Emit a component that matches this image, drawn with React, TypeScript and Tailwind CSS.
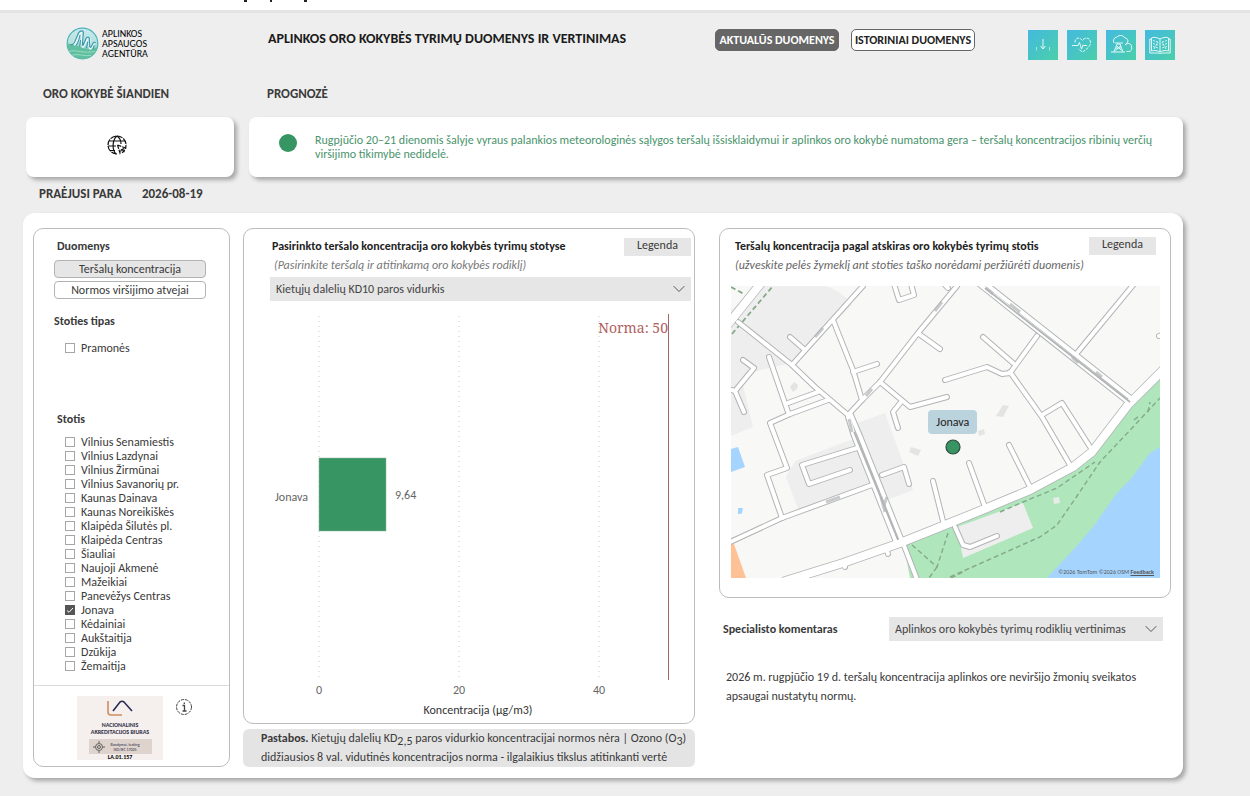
import { useState } from "react";
import type { ReactNode } from "react";

const stations = [
  "Vilnius Senamiestis",
  "Vilnius Lazdynai",
  "Vilnius Žirmūnai",
  "Vilnius Savanorių pr.",
  "Kaunas Dainava",
  "Kaunas Noreikiškės",
  "Klaipėda Šilutės pl.",
  "Klaipėda Centras",
  "Šiauliai",
  "Naujoji Akmenė",
  "Mažeikiai",
  "Panevėžys Centras",
  "Jonava",
  "Kėdainiai",
  "Aukštaitija",
  "Dzūkija",
  "Žemaitija",
];

function Check({ label, initial = false }: { label: string; initial?: boolean }) {
  const [on, setOn] = useState(initial);
  return (
    <label className="flex h-[14px] items-center gap-[6px] leading-[14px]">
      <span className="relative flex">
        <input
          type="checkbox"
          checked={on}
          onChange={() => setOn(!on)}
          className="peer size-[10px] appearance-none border border-[#a6a6a6] bg-white checked:border-[#555] checked:bg-[#555]"
        />
        <svg viewBox="0 0 10 10" className="pointer-events-none absolute inset-0 hidden size-[10px] peer-checked:block">
          <path d="M2 5.5 4 7.3 8 3" fill="none" stroke="#fff" strokeWidth="1" />
        </svg>
      </span>
      {label}
    </label>
  );
}

function Dropdown({ label, options, className }: { label: string; options: string[]; className: string }) {
  return (
    <div className={"relative " + className}>
      <select
        aria-label={label}
        className="h-6 w-full appearance-none bg-[#e6e6e6] pl-[6px] pr-7 text-[#444]"
      >
        {options.map((o) => (
          <option key={o}>{o}</option>
        ))}
      </select>
      <svg viewBox="0 0 12 8" className="pointer-events-none absolute right-[6px] top-2 h-2 w-3">
        <path d="M.7 1.2 6 6.5l5.3-5.3" fill="none" stroke="#555" strokeWidth="1" />
      </svg>
    </div>
  );
}

function Logo() {
  return (
    <a href="#" className="ml-[43px] flex h-[34px] items-center gap-[3px]">
      <svg viewBox="0 0 34 34" className="size-[33px]">
        <defs>
          <linearGradient id="lg" x1="0" y1="0" x2="0" y2="1">
            <stop offset="0" stopColor="#c8eaf0" />
            <stop offset="0.45" stopColor="#b7e3dd" />
            <stop offset="1" stopColor="#4cb894" />
          </linearGradient>
        </defs>
        <circle cx="17" cy="17" r="15.8" fill="url(#lg)" stroke="#4bb3b8" strokeWidth="1.2" />
        <path d="M1.500 17Q9 17.500 16 21T32.500 21A16 16 0 0 1 17 33 16 16 0 0 1 1.500 17z" fill="#5fbf9f" />
        <path d="M3 25c8-2 16 3 27 0M6 29c8-2 13 2 20 0" fill="none" stroke="#9bdcc4" strokeWidth="1" />
        <path d="M8 18.500 15 5l1.500 0L17.500 20l4.500-8.500h1.500L25 22l4-6" fill="none" stroke="#e4f6f8" strokeWidth="3" strokeLinejoin="round" />
        <path
          d="M5 18.500Q8 18.500 10 13l3-7q1-2 3.500-2 1.500 0 1.300 3L17 18q0 2 1 0l2.500-6q1-2 2.500-1.500T24 13l.5 7q.5 2 1.500 0l1.500-3q1-1.500 3-1"
          fill="none"
          stroke="#3f97ab"
          strokeWidth="1.300"
        />
        <path d="M10.500 19Q13 16 14.500 8M14 20.500l1-7M21 22l1.500-7M28 23l1-4" fill="none" stroke="#3f97ab" strokeWidth="1.100" />
      </svg>
      <span className="pt-px text-[10px] leading-[10px] text-black">
        APLINKOS
        <br />
        APSAUGOS
        <br />
        AGENTŪRA
      </span>
    </a>
  );
}

function Tile({ label, children }: { label: string; children: ReactNode }) {
  return (
    <button aria-label={label} className="size-[30px] bg-linear-to-br from-[#45b9df] to-[#4bcfa8] p-[3px]">
      <svg viewBox="0 0 24 24" className="size-6" fill="none" stroke="#fff" strokeOpacity="0.85" strokeWidth="1">
        {children}
      </svg>
    </button>
  );
}

function Tiles() {
  return (
    <div className="ml-auto mr-2 mt-1 flex gap-[9px]">
      <Tile label="Atsisiųsti">
        <path d="M12 6v10M9.500 13l2.500 3 2.500-3" />
        <path d="M5.500 14v3.500M18.500 14v3.500" strokeOpacity="0.5" />
      </Tile>
      <Tile label="Sveikata">
        <path d="M5 9.500C5 4 10 4 12.500 7.500 14 4 21 4 20.500 10c-.3 4-5 7-8 9-1.500-1-3-2-4.200-3.200" strokeDasharray="3 1" />
        <path d="M2 12.500h6l1.500-3 2 6.500 1.500-4 1 .5h3" />
      </Tile>
      <Tile label="Oro tarša">
        <path d="M5 10a4 4 0 0 1 3-6 5 5 0 0 1 8 1c3 0 4 4 1.500 5.500L16 12c3-3 7-1 6.500 2 1 3-1 4.500-3 4.500h-2" />
        <path d="M2 19h14M5 19l3-8h3l3 8M7 15h5M6.500 17.500l5.500-5M12.500 17.500l-5-5M6 10h8" />
      </Tile>
      <Tile label="Informacija">
        <path d="M12 6C8 4 5 4 3.500 5v13c3-1 6-.5 8.500 1 2.500-1.500 5.500-2 8.500-1V5C19 4 16 4 12 6zv13" />
        <path d="M3.500 6H1.800v14h9l1.200.8 1.200-.8h9V6h-1.700" />
        <path d="M5 7.500l5 1.500M5 10.500l5 1.500M5 13.500l5 1.500M19 7.500 14 9M19 10.500 14 12M19 13.500 14 15M6 16l4-7M18 16l-4-7" strokeWidth="0.900" strokeDasharray="2 1" />
      </Tile>
    </div>
  );
}

const minorRoads = [
  "M738 322 792 365 815 387 848 415",
  "M792 365 863 286",
  "M805 350 790 337",
  "M833 320 853 370 862 400",
  "M853 372 877 364",
  "M848 415 862 400 880 382 918 333 957 286",
  "M919 334 940 349",
  "M894 284 899 300 914 295 911 284",
  "M769 357 788 412",
  "M788 403 818 392",
  "M828 400 790 414 770 423 787 468 767 475 782 518",
  "M743 360 754 368 735 391 728 389",
  "M735 391 744 412",
  "M880 382 910 407 947 397",
  "M901 402 893 412 898 428",
  "M945 380 987 367 1002 374 1010 373",
  "M1010 373 1037 336",
  "M1013 363 983 337",
  "M1010 372 1042 417 1070 465",
  "M1042 415 1062 403 1092 450",
  "M1077 353 1134 284",
  "M969 463 985 507",
  "M1009 445 1031 489",
  "M955 527 963 545 970 547 997 536",
  "M903 543 918 582",
  "M857 448 802 465 809 484 850 470",
  "M872 485 782 518 728 543",
  "M882 475 904 467 909 484",
  "M933 481 944 525",
  "M844 562 845 567",
  "M886 548 888 554",
  "M944 284 948 288",
  "M1165 334 1159 336",
];
const doubleRoads = [
  "M979 284 1128 402",
  "M986 284 1132 399",
  "M848 417 854 436 896 542",
  "M851 415 860 436 902 541",
];
const mainRoads = [
  "M1164 369 1128 405 1092 452 1073 467 1030 490 987 508 950 523 900 543 843 563 785 581",
  "M762 282 725 328",
];

function StationMap() {
  return (
    <div className="relative">
      <svg
        viewBox="731 286 429 292"
        className="block w-full"
        role="img"
        aria-label="Jonavos stoties žemėlapis"
      >
        <rect x="731" y="286" width="429" height="292" fill="#f8f8f7" />
        <g fill="#eeeeee">
          <path d="M731 310 759 286H826Q842 291 852 305L792 363 757 371 743 377 731 393z" />
          <path d="M731 393 743 385 753 427 731 436z" />
          <path d="M795 461 853 439 873 484 799 511 786 477z" />
          <path d="M857 423 885 413 913 490 887 500z" />
        </g>
        <path d="M1160 376 1133 404 1094 454 1074 470 1031 493 950 527 905 545 916 578H1062L1160 455z" fill="#afe6bc" />
        <path d="M904 546 907 545 919 578H910z" fill="#afe6bc" />
        <path d="M957 527 1023 503 1033 528 963 558z" fill="#eeeeee" />
        <path d="M1160 447 1150 453 1142 464 1130 480 1117 493 1093 527 1075 548 1047 578H1160z" fill="#a5d4ff" />
        <path d="M731 449 738 447 745 467 731 472zM738 508h5l-1 5-2 1h-2z" fill="#a5d4ff" />
        <path d="M731 542 734 544 746 578H731z" fill="#ffc296" />
        <g fill="#e4e4e3">
          <path d="M794 382l4 3-1 4-4 3-3-5zM911 447l10 3-3 6-9-4zM1003 405l6 1-6 11-7-1zM978 431l6-2 1 5-6 2z" />
        </g>
        <path d="M1053 498l6-1 1 6-6 1z" fill="#e8ece6" />
        <g fill="none" stroke="#86a98b" strokeWidth="1.400" strokeDasharray="5 3">
          <path d="M950 577 1040 537 1057 525 1077 496 1100 462 1133 427 1160 398" />
          <path d="M1000 512 1023 502 1057 488 1095 462" />
          <path d="M912 545 937 567 948 533M937 567 929 578M951 578 965 571" />
          <path d="M732 334 773 286M731 287 744 294" strokeWidth="1.800" />
          <path d="M1134 420 1139 416M1148 412 1150 402" />
        </g>
        <g fill="none" strokeLinejoin="round" strokeLinecap="round">
          {[...minorRoads, ...doubleRoads].map((d) => (
            <path key={d} d={d} stroke="#b2b4b5" strokeWidth="6" />
          ))}
          {mainRoads.map((d) => (
            <path key={d} d={d} stroke="#b2b4b5" strokeWidth="9.500" />
          ))}
          {[...minorRoads, ...doubleRoads].map((d) => (
            <path key={d} d={d} stroke="#fff" strokeWidth="4" />
          ))}
          {mainRoads.map((d) => (
            <path key={d} d={d} stroke="#fff" strokeWidth="8" />
          ))}
        </g>
        <g fill="none" stroke="#b2b4b5">
          <path d="M985 288 1130 402M854 432 898 540" strokeWidth="1.600" />
          <path d="M849 419 852 432M881 497 885 512M887 497 883 508M986 288 993 294M1010 304 1020 312M1072 357 1078 363M1096 372 1102 377M935 311 942 302M815 337 823 328M866 396 872 389M826 502 840 497" strokeWidth="3" strokeOpacity="0.700" />
        </g>
        <circle cx="953" cy="447" r="7" fill="#379463" stroke="#2e4a3b" strokeWidth="1.200" />
      </svg>
      <div className="absolute left-[46%] top-[42.5%] rounded bg-[#bad3dd] px-2 py-1 leading-4 text-[#222]">Jonava</div>
      <div className="absolute bottom-[2px] right-[6px] text-[6px] leading-[8px] text-[#555]">
        ©2026 TomTom ©2026 OSM{" "}
        <a href="#" className="font-bold underline">
          Feedback
        </a>
      </div>
    </div>
  );
}

function Chart() {
  const ticks = [0, 20, 40];
  const x = (v: number) => 319 + v * 7;
  return (
    <svg viewBox="244 301 450 422" className="block w-full" role="img" aria-label="Koncentracija pagal stotį">
      {ticks.map((t) => (
        <g key={t}>
          <line x1={x(t)} x2={x(t)} y1="316" y2="681" stroke="#c8c8c8" strokeDasharray="1 4" />
          <text x={x(t)} y="694" textAnchor="middle" fontSize="12" fill="#666">
            {t}
          </text>
        </g>
      ))}
      <rect x={x(0)} y="458" width="67" height="73" fill="#379463" stroke="#8fb39e" strokeWidth="0.500" />
      <text x="308" y="501" textAnchor="end" fontSize="12" fill="#666">
        Jonava
      </text>
      <text x="395" y="499" fontSize="12" fill="#666">
        9,64
      </text>
      <line x1="668.500" x2="668.500" y1="314" y2="680" stroke="#a0666a" />
      <text x="668" y="333" textAnchor="end" fontSize="14" fill="#b0605f" className="font-['Noto_Serif','DejaVu_Serif',serif]">
        Norma: 50
      </text>
      <text x="478" y="714" textAnchor="middle" fontSize="12" fill="#333">
        Koncentracija (µg/m3)
      </text>
    </svg>
  );
}

function Accreditation() {
  return (
    <div className="flex h-16 w-[86px] flex-col items-center overflow-hidden bg-[#f5f0ed] pt-1 text-center text-[#2b2b45]">
      <svg viewBox="0 0 26 16" className="h-4 w-[26px] shrink-0" fill="none" strokeWidth="1.600">
        <path d="M1 1v11q0 3 3 3h11" stroke="#d08b5f" />
        <path d="M6 11 13 2q2-1.500 4 0l8 9" stroke="#2b2b55" />
      </svg>
      <p className="mt-[6px] whitespace-nowrap text-[6px] font-bold leading-[7px]">
        NACIONALINIS
        <br />
        AKREDITACIJOS BIURAS
      </p>
      <div className="mt-[3px] flex h-[15px] w-[63px] shrink-0 items-center gap-[6px] bg-[#dfd3cd] px-1">
        <svg viewBox="0 0 12 12" className="size-3 shrink-0" fill="none" stroke="#555" strokeWidth="0.900">
          <circle cx="6" cy="6" r="3.500" />
          <circle cx="6" cy="6" r="1.500" />
          <path d="M6 0v2M6 10v2M0 6h2M10 6h2" />
        </svg>
        <p className="whitespace-nowrap text-[4px] leading-[5px]">
          Bandymai, testing
          <br />
          ISO/IEC 17025
        </p>
      </div>
      <p className="text-[6px] font-bold leading-[6px] text-black">LA.01.157</p>
    </div>
  );
}

const panel = "rounded-[10px] border border-[#bdbdbd] bg-white";
const floating = "bg-white shadow-[3px_3px_4px_rgba(0,0,0,0.3)]";

export default function App() {
  return (
    <div className="min-h-screen bg-[#eeeeee] font-['Carlito','Lato',sans-serif] text-[12px] text-[#3a3a3a]">
      <div className="h-[13px] border-b-[3px] border-[#e4e4e4] bg-white">
        <svg viewBox="0 0 80 3" className="ml-[240px] h-[3px] w-20" fill="#222" aria-hidden="true">
          <path d="M4 0h3v2H4zM30 0h2v2h-2zM64 0h3v2h-3z" />
        </svg>
      </div>
      <main className="pb-[18px] pl-[23px] pr-[67px] pt-[13px]">
        <header className="flex items-start">
          <div className="w-[245px] shrink-0">
            <Logo />
          </div>
          <h1 className="w-[447px] pt-px text-[14px] font-bold leading-6 text-[#1a1a1a]">
            APLINKOS ORO KOKYBĖS TYRIMŲ DUOMENYS IR VERTINIMAS
          </h1>
          <nav className="mt-[3px] flex gap-3 whitespace-nowrap font-bold">
            <button className="h-[22px] w-[124px] rounded-[5px] border border-[#666] bg-[#666] text-white">AKTUALŪS DUOMENYS</button>
            <button className="h-[22px] w-[124px] rounded-[5px] border border-[#666] bg-white text-[#222]">ISTORINIAI DUOMENYS</button>
          </nav>
          <Tiles />
        </header>

        <div className="mt-[22px] flex">
          <section className="w-[226px] shrink-0">
            <h2 className="pl-5 text-[13px] font-bold leading-6">ORO KOKYBĖ ŠIANDIEN</h2>
            <div className={"ml-[3px] mr-[15px] mt-[11px] flex h-[60px] items-center justify-center rounded-[8px] " + floating}>
              <svg viewBox="0 0 22 22" className="mb-1 mr-[26px] size-[22px]" fill="none" stroke="#111" strokeWidth="1.200">
                <path d="M11 20A9 9 0 1 1 20 11" strokeDasharray="6 1" />
                <path d="M3.500 7h15M2 12h8M4 16.500h5M11 2c-5 4-5 14-1 18M11 2c3 2 4 5 4 8" />
                <path d="M11.500 11l8 3-3.500 1.500 2.500 2.500M11.500 11l2.500 8 1.500-3.500M20 11c0 4-2 6-4 8" strokeDasharray="4 1" />
              </svg>
            </div>
          </section>
          <section className="min-w-0 flex-1">
            <h2 className="pl-[18px] text-[13px] font-bold leading-6">PROGNOZĖ</h2>
            <div className={"mt-[11px] flex h-[60px] items-center gap-[18px] rounded-[8px] pl-[30px] pr-4 text-[#4a946c] " + floating}>
              <span className="mb-2 size-[18px] shrink-0 rounded-full bg-[#379463]" />
              <p className="leading-[14px]">
                Rugpjūčio 20–21 dienomis šalyje vyraus palankios meteorologinės sąlygos teršalų išsisklaidymui ir aplinkos oro kokybė numatoma
                gera – teršalų koncentracijos ribinių verčių viršijimo tikimybė nedidelė.
              </p>
            </div>
          </section>
        </div>

        <div className="mt-[5px] flex gap-5 pl-4 text-[13px] font-bold leading-6">
          <h2>PRAĖJUSI PARA</h2>
          <time dateTime="2026-08-19">2026-08-19</time>
        </div>

        <div className={"mt-[7px] flex rounded-[12px] pb-[11px] pl-[10px] pr-3 pt-[15px] " + floating}>
          <aside className={"mr-[13px] flex w-[197px] shrink-0 flex-col " + panel}>
            <div className="px-5 pt-[9px]">
              <h3 className="pl-[3px] font-bold leading-4">Duomenys</h3>
              <div className="mt-[6px] flex w-[152px] flex-col gap-[3px]">
                <button className="h-[18px] rounded border border-[#b3b3b3] bg-[#e6e6e6] leading-4">Teršalų koncentracija</button>
                <button className="h-[18px] rounded border border-[#b3b3b3] bg-white leading-4">Normos viršijimo atvejai</button>
              </div>
              <h3 className="mt-[14px] font-bold leading-4">Stoties tipas</h3>
              <div className="ml-[11px] mt-3">
                <Check label="Pramonės" />
              </div>
              <h3 className="mt-14 pl-[3px] font-bold leading-4">Stotis</h3>
              <div className="ml-[11px] mt-2">
                {stations.map((s) => (
                  <Check key={s} label={s} initial={s === "Jonava"} />
                ))}
              </div>
            </div>
            <div className="mt-auto flex items-start gap-3 border-t border-[#dcdcdc] pb-[6px] pl-[43px] pt-[10px]">
              <Accreditation />
              <button aria-label="Informacija" className="mt-[2px]">
                <svg viewBox="0 0 18 18" className="size-[18px]" fill="none" stroke="#444">
                  <circle cx="9" cy="9" r="7.500" strokeDasharray="3 1" />
                  <path d="M7.500 7.500H9.500V13M7.500 13h4M9.300 4.500V6" strokeWidth="1.300" />
                </svg>
              </button>
            </div>
          </aside>

          <section className="min-w-0 flex-1">
            <div className={panel}>
              <div className="flex items-start justify-between pl-7 pr-[3px] pt-[9px]">
                <h3 className="font-bold leading-4 text-[#222]">Pasirinkto teršalo koncentracija oro kokybės tyrimų stotyse</h3>
                <button className="h-[18px] w-[67px] bg-[#e6e6e6] pb-1 leading-[14px]">Legenda</button>
              </div>
              <p className="pl-[30px] pt-px italic leading-4 text-[#777]">(Pasirinkite teršalą ir atitinkamą oro kokybės rodiklį)</p>
              <Dropdown label="Rodiklis" options={["Kietųjų dalelių KD10 paros vidurkis"]} className="ml-[26px] mr-[3px] mt-1" />
              <Chart />
            </div>
            <div className="mt-[5px] rounded-[6px] bg-[#e4e4e4] pl-[18px] pr-1">
              <p className="leading-[19px]">
                <b>Pastabos.</b> Kietųjų dalelių KD<sub className="text-[12px] leading-none">2,5</sub> paros vidurkio koncentracijai normos nėra | Ozono (O
                <sub className="text-[12px] leading-none">3</sub>) didžiausios 8 val. vidutinės koncentracijos norma - ilgalaikius tikslus atitinkanti vertė
              </p>
            </div>
          </section>

          <section className="ml-6 min-w-0 flex-1">
            <div className={"pb-[19px] pl-[11px] pr-[10px] pt-2 " + panel}>
              <div className="flex items-start justify-between pl-1 pr-1">
                <h3 className="pt-px font-bold leading-4 text-[#222]">Teršalų koncentracija pagal atskiras oro kokybės tyrimų stotis</h3>
                <button className="h-[18px] w-[67px] bg-[#e6e6e6] pb-1 leading-[14px]">Legenda</button>
              </div>
              <p className="mb-[11px] pl-1 italic leading-5 text-[#666]">(užveskite pelės žymeklį ant stoties taško norėdami peržiūrėti duomenis)</p>
              <StationMap />
            </div>
            <div className="mt-[19px] flex justify-between pl-1 pr-2">
              <h3 className="font-bold leading-6">Specialisto komentaras</h3>
              <Dropdown label="Komentaras" options={["Aplinkos oro kokybės tyrimų rodiklių vertinimas"]} className="w-[274px]" />
            </div>
            <p className="mt-[27px] pl-[7px] pr-6 leading-[19px]">
              2026 m. rugpjūčio 19 d. teršalų koncentracija aplinkos ore neviršijo žmonių sveikatos apsaugai nustatytų normų.
            </p>
          </section>
        </div>
      </main>
    </div>
  );
}
